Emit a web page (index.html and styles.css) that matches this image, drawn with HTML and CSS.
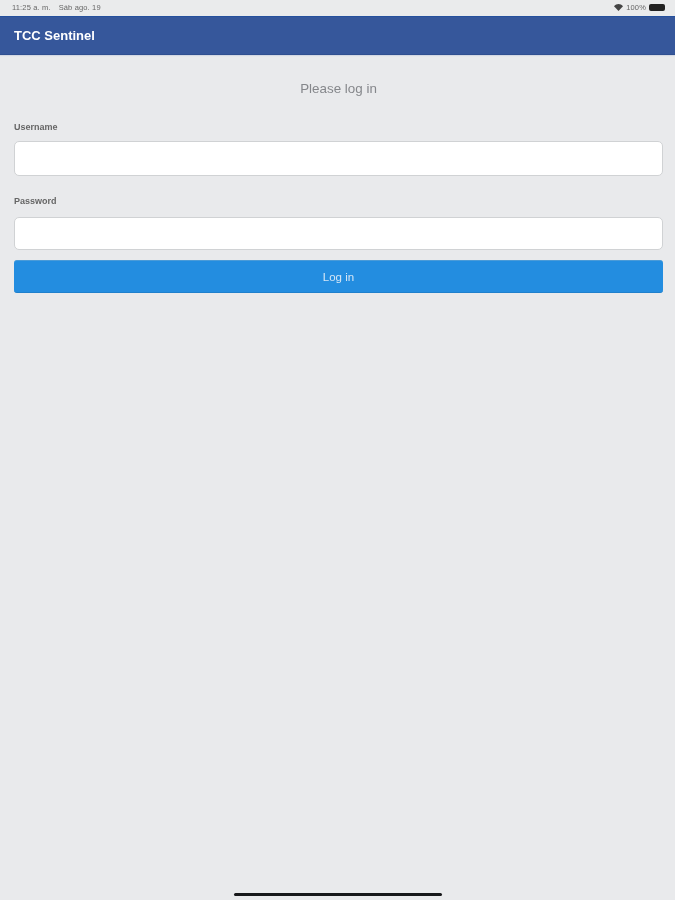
FILE: index.html
```html
<!DOCTYPE html>
<html lang="en">
<head>
<meta charset="utf-8">
<title>TCC Sentinel</title>
<link rel="stylesheet" href="styles.css">
</head>
<body>
<div class="screen">
  <div class="status">
    <div class="status-left soft"><span>11:25 a. m.</span><span>Sáb ago. 19</span></div>
    <div class="status-right soft">
      <svg class="wifi" width="9" height="7" viewBox="0 0 18 14"><path d="M9 14 0 4.5C5-1.5 13-1.5 18 4.5Z" fill="#444"/></svg>
      <span>100%</span>
      <span class="battery"></span>
    </div>
  </div>
  <header class="bar"><span class="soft">TCC Sentinel</span></header>
  <main class="form">
    <h1 class="title soft">Please log in</h1>
    <label class="label label-user soft">Username</label>
    <div class="input input-user"></div>
    <label class="label label-pass soft">Password</label>
    <div class="input input-pass"></div>
    <div class="button"><span class="soft">Log in</span></div>
  </main>
  <div class="home"></div>
</div>
</body>
</html>
```
FILE: styles.css
```css
* { box-sizing: border-box; }
html, body { margin: 0; padding: 0; }
body { width: 675px; height: 900px; overflow: hidden; background: #e9eaec; font-family: "Liberation Sans", Arial, sans-serif; }
.screen { position: relative; width: 675px; height: 900px; display: flex; flex-direction: column; }
.soft { filter: blur(0.45px); }
.status { height: 16px; flex: none; display: flex; justify-content: space-between; align-items: center; padding: 0 10px 1px 12px; font-size: 7.5px; letter-spacing: 0.15px; color: #666; background: #eaebec; }
.status-left { display: flex; gap: 8px; }
.status-right { display: flex; align-items: center; gap: 3px; }
.battery { width: 16px; height: 7px; border-radius: 2px; background: #222; display: block; }
.bar { height: 39px; flex: none; background: #36579b; border-top: 1px solid #25509d; border-bottom: 1px solid #2f4f90; box-shadow: 0 1px 1px #d3d8e3; color: #fff; font-size: 13px; font-weight: 700; display: flex; align-items: center; padding-left: 14px; }
.form { display: flex; flex-direction: column; padding: 0 12px 0 14px; }
.title { margin: 25px 0 0; height: 18px; font-size: 13.4px; line-height: 18px; font-weight: 400; color: #85878b; text-align: center; }
.label { display: block; font-size: 9px; line-height: 11px; font-weight: 700; color: #666; }
.label-user { margin-top: 24px; }
.label-pass { margin-top: 20px; }
.input { background: #fff; border: 1px solid #d0d2d4; border-radius: 5px; }
.input-user { height: 35px; margin-top: 8px; }
.input-pass { height: 33px; margin-top: 10px; }
.button { height: 33px; margin-top: 10px; background: #238de0; border-top: 1px solid #4a9bd8; border-bottom: 1px solid #1f80cc; border-radius: 3px; color: #d5e6f5; font-size: 11.5px; line-height: 32px; text-align: center; }
.home { position: absolute; left: 234px; bottom: 4px; width: 208px; height: 3px; border-radius: 2px; background: #17181a; }
```
